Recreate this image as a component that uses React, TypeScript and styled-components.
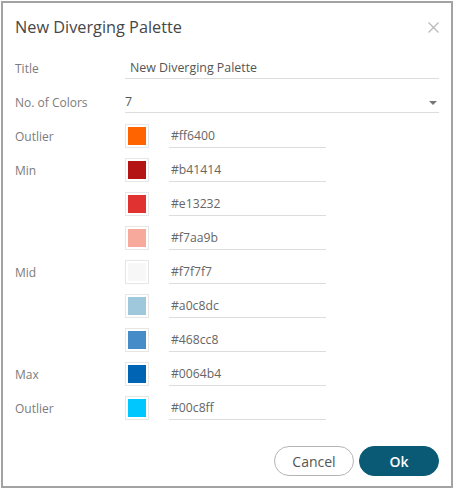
import React from 'react';
import styled, { createGlobalStyle } from 'styled-components';

const GlobalStyle = createGlobalStyle`
  html, body {
    margin: 0;
    padding: 0;
    background: #ffffff;
  }
  body {
    font-family: "Open Sans", "Liberation Sans", sans-serif;
  }
`;

const Page = styled.div`
  padding: 1px;
  width: 454px;
  height: 490px;
  box-sizing: border-box;
`;

const Dialog = styled.div`
  width: 452px;
  height: 487px;
  box-sizing: border-box;
  border: 2px solid #a3a3a3;
  background: #ffffff;
  display: flex;
  flex-direction: column;
  padding: 12px 12px 10px 12px;
`;

const Header = styled.div`
  display: flex;
  align-items: center;
  justify-content: space-between;
  height: 24px;
`;

const Heading = styled.h2`
  margin: 0;
  font-size: 16.3px;
  font-weight: 400;
  line-height: 24px;
  color: #474747;
`;

const CloseButton = styled.button`
  border: none;
  background: none;
  padding: 0;
  width: 12px;
  height: 12px;
  display: flex;
  align-items: center;
  justify-content: center;
  cursor: pointer;
  svg {
    width: 11px;
    height: 11px;
  }
`;

const Form = styled.div`
  display: flex;
  flex-direction: column;
  margin-top: 18px;
  padding-right: 0;
`;

const Row = styled.div<{ $gap: number }>`
  display: flex;
  align-items: center;
  margin-bottom: ${(p) => p.$gap}px;
`;

const Label = styled.div`
  width: 110px;
  flex-shrink: 0;
  font-size: 12px;
  color: #7c7c7c;
`;

const TextField = styled.div`
  flex: 1;
  height: 22px;
  box-sizing: border-box;
  border-bottom: 1px solid #dddddd;
  display: flex;
  align-items: center;
  padding-left: 5px;
  font-size: 12.4px;
  color: #555555;
`;

const SelectField = styled(TextField)`
  padding-left: 0;
  padding-right: 2px;
  justify-content: space-between;
`;

const Caret = styled.span`
  width: 0;
  height: 0;
  border-left: 4px solid transparent;
  border-right: 4px solid transparent;
  border-top: 4px solid #777777;
  margin-top: 2px;
`;

const Swatch = styled.div<{ $color: string }>`
  width: 24px;
  height: 24px;
  box-sizing: border-box;
  border: 1px solid #e6e6e6;
  padding: 2px;
  flex-shrink: 0;
  &::after {
    content: "";
    display: block;
    width: 18px;
    height: 18px;
    background: ${(p) => p.$color};
  }
`;

const HexField = styled.div`
  width: 157px;
  height: 24px;
  box-sizing: border-box;
  margin-left: 20px;
  border-bottom: 1px solid #dddddd;
  display: flex;
  align-items: center;
  padding-left: 2px;
  font-size: 12.2px;
  color: #666666;
`;

const Footer = styled.div`
  margin-top: auto;
  display: flex;
  justify-content: flex-end;
  gap: 5px;
`;

const Button = styled.button<{ $primary?: boolean }>`
  width: 80px;
  height: 30px;
  border-radius: 15px;
  font-family: inherit;
  font-size: 14px;
  cursor: pointer;
  border: 1px solid ${(p) => (p.$primary ? '#0a5a75' : '#b4b4b4')};
  background: ${(p) => (p.$primary ? '#0a5a75' : '#ffffff')};
  color: ${(p) => (p.$primary ? '#ffffff' : '#555555')};
  font-weight: ${(p) => (p.$primary ? 600 : 400)};
`;

const colors = [
  { label: 'Outlier', hex: '#ff6400' },
  { label: 'Min', hex: '#b41414' },
  { label: '', hex: '#e13232' },
  { label: '', hex: '#f7aa9b' },
  { label: 'Mid', hex: '#f7f7f7' },
  { label: '', hex: '#a0c8dc' },
  { label: '', hex: '#468cc8' },
  { label: 'Max', hex: '#0064b4' },
  { label: 'Outlier', hex: '#00c8ff' },
];

export default function App() {
  return (
    <Page>
      <GlobalStyle />
      <Dialog>
        <Header>
          <Heading>New Diverging Palette</Heading>
          <CloseButton aria-label="Close">
            <svg viewBox="0 0 11 11">
              <path d="M0.5 0.5L10.5 10.5M10.5 0.5L0.5 10.5" stroke="#b8b8b8" strokeWidth="1.2" fill="none" />
            </svg>
          </CloseButton>
        </Header>
        <Form>
          <Row $gap={12}>
            <Label>Title</Label>
            <TextField>New Diverging Palette</TextField>
          </Row>
          <Row $gap={11}>
            <Label>No. of Colors</Label>
            <SelectField>
              <span>7</span>
              <Caret />
            </SelectField>
          </Row>
          {colors.map((c, i) => (
            <Row $gap={10} key={i}>
              <Label>{c.label}</Label>
              <Swatch $color={c.hex} />
              <HexField>{c.hex}</HexField>
            </Row>
          ))}
        </Form>
        <Footer>
          <Button>Cancel</Button>
          <Button $primary>Ok</Button>
        </Footer>
      </Dialog>
    </Page>
  );
}
